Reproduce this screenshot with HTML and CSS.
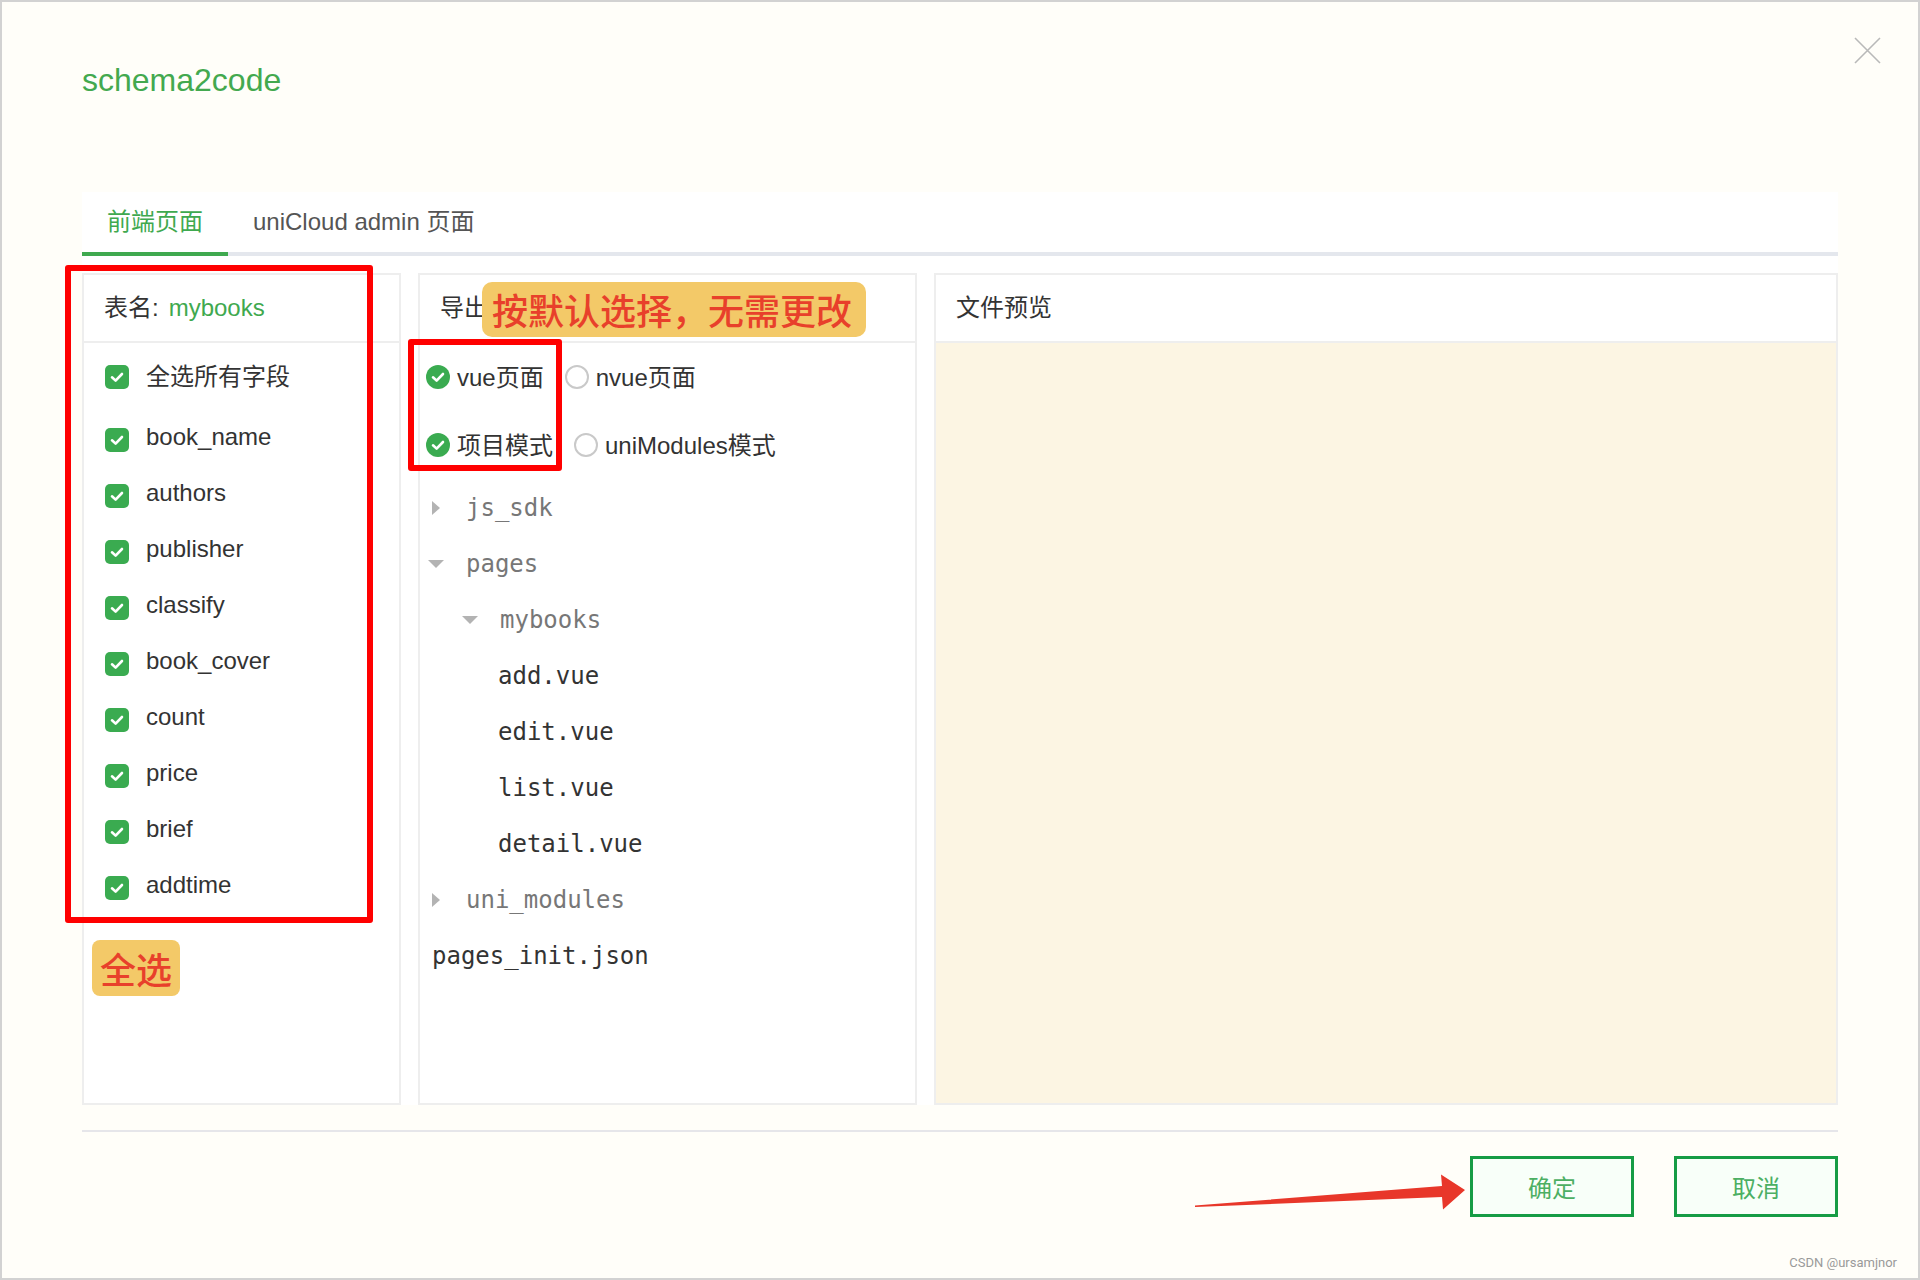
FILE: index.html
```html
<!DOCTYPE html>
<html lang="zh-CN">
<head>
<meta charset="utf-8">
<title>schema2code</title>
<link rel="stylesheet" href="styles.css">
</head>
<body>
<div class="dialog">
  <h1 class="title">schema2code</h1>
  <button class="close" aria-label="关闭">
    <svg width="27" height="27" viewBox="0 0 27 27"><path d="M1 1 L26 26 M26 1 L1 26" stroke="#b9b9b9" stroke-width="1.6" fill="none"/></svg>
  </button>
  <div class="main">
    <div class="tabs">
      <div class="tab active">前端页面</div>
      <div class="tab">uniCloud admin 页面</div>
    </div>
    <div class="panels">
      <section class="panel">
        <div class="panel-head">表名:<span class="green">mybooks</span></div>
        <div class="panel-body fields">
          <div class="check first"><svg class="cb" width="24" height="24" viewBox="0 0 24 24"><rect width="24" height="24" rx="5" fill="#3aab50"/><path d="M7 12.3 L10.6 15.6 L17 9" stroke="#fff" stroke-width="2.6" fill="none" stroke-linecap="round" stroke-linejoin="round"/></svg><span>全选所有字段</span></div>
          <div class="check"><svg class="cb" width="24" height="24" viewBox="0 0 24 24"><rect width="24" height="24" rx="5" fill="#3aab50"/><path d="M7 12.3 L10.6 15.6 L17 9" stroke="#fff" stroke-width="2.6" fill="none" stroke-linecap="round" stroke-linejoin="round"/></svg><span>book_name</span></div>
          <div class="check"><svg class="cb" width="24" height="24" viewBox="0 0 24 24"><rect width="24" height="24" rx="5" fill="#3aab50"/><path d="M7 12.3 L10.6 15.6 L17 9" stroke="#fff" stroke-width="2.6" fill="none" stroke-linecap="round" stroke-linejoin="round"/></svg><span>authors</span></div>
          <div class="check"><svg class="cb" width="24" height="24" viewBox="0 0 24 24"><rect width="24" height="24" rx="5" fill="#3aab50"/><path d="M7 12.3 L10.6 15.6 L17 9" stroke="#fff" stroke-width="2.6" fill="none" stroke-linecap="round" stroke-linejoin="round"/></svg><span>publisher</span></div>
          <div class="check"><svg class="cb" width="24" height="24" viewBox="0 0 24 24"><rect width="24" height="24" rx="5" fill="#3aab50"/><path d="M7 12.3 L10.6 15.6 L17 9" stroke="#fff" stroke-width="2.6" fill="none" stroke-linecap="round" stroke-linejoin="round"/></svg><span>classify</span></div>
          <div class="check"><svg class="cb" width="24" height="24" viewBox="0 0 24 24"><rect width="24" height="24" rx="5" fill="#3aab50"/><path d="M7 12.3 L10.6 15.6 L17 9" stroke="#fff" stroke-width="2.6" fill="none" stroke-linecap="round" stroke-linejoin="round"/></svg><span>book_cover</span></div>
          <div class="check"><svg class="cb" width="24" height="24" viewBox="0 0 24 24"><rect width="24" height="24" rx="5" fill="#3aab50"/><path d="M7 12.3 L10.6 15.6 L17 9" stroke="#fff" stroke-width="2.6" fill="none" stroke-linecap="round" stroke-linejoin="round"/></svg><span>count</span></div>
          <div class="check"><svg class="cb" width="24" height="24" viewBox="0 0 24 24"><rect width="24" height="24" rx="5" fill="#3aab50"/><path d="M7 12.3 L10.6 15.6 L17 9" stroke="#fff" stroke-width="2.6" fill="none" stroke-linecap="round" stroke-linejoin="round"/></svg><span>price</span></div>
          <div class="check"><svg class="cb" width="24" height="24" viewBox="0 0 24 24"><rect width="24" height="24" rx="5" fill="#3aab50"/><path d="M7 12.3 L10.6 15.6 L17 9" stroke="#fff" stroke-width="2.6" fill="none" stroke-linecap="round" stroke-linejoin="round"/></svg><span>brief</span></div>
          <div class="check"><svg class="cb" width="24" height="24" viewBox="0 0 24 24"><rect width="24" height="24" rx="5" fill="#3aab50"/><path d="M7 12.3 L10.6 15.6 L17 9" stroke="#fff" stroke-width="2.6" fill="none" stroke-linecap="round" stroke-linejoin="round"/></svg><span>addtime</span></div>
        </div>
      </section>
      <section class="panel">
        <div class="panel-head">导出</div>
        <div class="panel-body export">
          <div class="radio-row">
            <span class="radio"><svg width="24" height="24" viewBox="0 0 24 24"><circle cx="12" cy="12" r="12" fill="#3aab50"/><path d="M7 12.3 L10.6 15.6 L17 9" stroke="#fff" stroke-width="2.6" fill="none" stroke-linecap="round" stroke-linejoin="round"/></svg><span>vue页面</span></span>
            <span class="radio"><svg width="24" height="24" viewBox="0 0 24 24"><circle cx="12" cy="12" r="11" fill="#fff" stroke="#c9c9c9" stroke-width="2"/></svg><span>nvue页面</span></span>
          </div>
          <div class="radio-row">
            <span class="radio"><svg width="24" height="24" viewBox="0 0 24 24"><circle cx="12" cy="12" r="12" fill="#3aab50"/><path d="M7 12.3 L10.6 15.6 L17 9" stroke="#fff" stroke-width="2.6" fill="none" stroke-linecap="round" stroke-linejoin="round"/></svg><span>项目模式</span></span>
            <span class="radio"><svg width="24" height="24" viewBox="0 0 24 24"><circle cx="12" cy="12" r="11" fill="#fff" stroke="#c9c9c9" stroke-width="2"/></svg><span>uniModules模式</span></span>
          </div>
          <ul class="tree">
            <li class="node dir lv0"><svg class="caret" width="16" height="16" viewBox="0 0 16 16"><path d="M4 1 L12 8 L4 15 Z" fill="#b3b3b3"/></svg><span>js_sdk</span></li>
            <li class="node dir lv0"><svg class="caret" width="16" height="16" viewBox="0 0 16 16"><path d="M0 4 L16 4 L8 12 Z" fill="#b3b3b3"/></svg><span>pages</span></li>
            <li class="node dir lv1"><svg class="caret" width="16" height="16" viewBox="0 0 16 16"><path d="M0 4 L16 4 L8 12 Z" fill="#b3b3b3"/></svg><span>mybooks</span></li>
            <li class="node file lv2">add.vue</li>
            <li class="node file lv2">edit.vue</li>
            <li class="node file lv2">list.vue</li>
            <li class="node file lv2">detail.vue</li>
            <li class="node dir lv0"><svg class="caret" width="16" height="16" viewBox="0 0 16 16"><path d="M4 1 L12 8 L4 15 Z" fill="#b3b3b3"/></svg><span>uni_modules</span></li>
            <li class="node file root">pages_init.json</li>
          </ul>
        </div>
      </section>
      <section class="panel">
        <div class="panel-head">文件预览</div>
        <div class="panel-body preview"></div>
      </section>
    </div>
  </div>
  <div class="divider"></div>
  <div class="actions">
    <button class="btn">确定</button>
    <button class="btn">取消</button>
  </div>
</div>

<div class="mark mark-fields"></div>
<div class="mark mark-mode"></div>
<div class="note note-default">按默认选择，无需更改</div>
<div class="note note-all">全选</div>
<svg class="arrow" width="280" height="45" viewBox="0 0 280 45"><polygon points="5,35.5 252,16 251,4.5 275,20 253,39.5 252,27 5,37" fill="#e8372a"/></svg>
<div class="watermark">CSDN @ursamjnor</div>
</body>
</html>
```

FILE: styles.css
```css
* { box-sizing: border-box; }

html, body { margin: 0; padding: 0; }

body {
  width: 1920px;
  height: 1280px;
  border: 2px solid #d2d2d2;
  background: #fffef9;
  position: relative;
  overflow: hidden;
  font-family: "Liberation Sans", "Noto Sans CJK SC", sans-serif;
  color: #333;
}

.dialog {
  padding: 0 80px;
}

.title {
  margin: 58px 0 0;
  height: 40px;
  line-height: 40px;
  font-size: 32px;
  font-weight: normal;
  color: #43a94f;
}

.close {
  position: absolute;
  left: 1852px;
  top: 35px;
  width: 27px;
  height: 27px;
  padding: 0;
  border: 0;
  background: none;
  display: block;
}
.close svg { display: block; }

.main {
  margin-top: 92px;
  background: #fff;
  height: 913px;
}

.tabs {
  display: flex;
  height: 64px;
  border-bottom: 4px solid #e4e7ed;
}

.tab {
  height: 64px;
  padding: 0 25px;
  line-height: 60px;
  font-size: 24px;
  color: #555;
  margin-bottom: -4px;
  border-bottom: 4px solid transparent;
}
.tab.active {
  color: #3fa94f;
  border-bottom-color: #3fa94f;
}

.panels {
  margin-top: 17px;
  display: grid;
  grid-template-columns: 319px 499px 1fr;
  column-gap: 17px;
  height: 832px;
}

.panel {
  border: 2px solid #eeeeee;
  display: flex;
  flex-direction: column;
  background: #fff;
  min-height: 0;
}

.panel-head {
  height: 68px;
  flex: none;
  border-bottom: 2px solid #eeeeee;
  padding-left: 20px;
  line-height: 66px;
  font-size: 24px;
  color: #333;
}

.green { color: #3fa94f; margin-left: 10px; }

.panel-body { flex: 1; }

.fields {
  padding: 6px 0 0 21px;
}

.check {
  display: flex;
  align-items: center;
  height: 56px;
  font-size: 24px;
  color: #333;
}
.check.first { margin-bottom: 7px; }
.check .cb { flex: none; margin-right: 17px; }
.check span { position: relative; top: -3px; }

.export {
  padding: 1px 0 0 6px;
}

.radio-row {
  display: flex;
  align-items: center;
  height: 68px;
  font-size: 24px;
  color: #333;
}

.radio {
  display: flex;
  align-items: center;
}
.radio + .radio { margin-left: 21px; }
.radio svg { flex: none; margin-right: 7px; position: relative; top: -1px; }
.radio span { position: relative; top: -3px; }

.tree {
  list-style: none;
  margin: 0;
  padding: 0;
  font-family: "DejaVu Sans Mono", "Liberation Mono", monospace;
  font-size: 24px;
}

.node {
  display: flex;
  align-items: center;
  height: 56px;
}
.node .caret { flex: none; margin-right: 22px; }
.node.dir { color: #777; }
.node.file { color: #333; }
.node.lv0 { padding-left: 2px; }
.node.lv1 { padding-left: 36px; }
.node.lv2 { padding-left: 72px; }
.node.root { padding-left: 6px; }

.preview {
  background: #fcf5e3;
}

.divider {
  margin-top: 25px;
  height: 2px;
  background: #e6e6ea;
}

.actions {
  margin-top: 24px;
  display: flex;
  justify-content: flex-end;
  gap: 40px;
}

.btn {
  width: 164px;
  height: 61px;
  border: 3px solid #169c45;
  background: #f8fff9;
  color: #4caf63;
  font-family: "Liberation Sans", "Noto Sans CJK SC", sans-serif;
  font-size: 24px;
  padding: 0;
}

/* annotations */
.mark {
  position: absolute;
  border: 6px solid #ff0000;
  border-radius: 3px;
}
.mark-fields { left: 63px; top: 263px; width: 308px; height: 658px; }
.mark-mode { left: 406px; top: 337px; width: 154px; height: 132px; }

.note {
  position: absolute;
  background: #f3c968;
  color: #e8402b;
  font-family: "Noto Sans CJK SC", sans-serif;
  font-weight: 500;
  font-size: 36px;
  white-space: nowrap;
}
.note-default {
  left: 480px;
  top: 280px;
  width: 384px;
  height: 55px;
  line-height: 55px;
  padding-left: 10px;
  border-radius: 10px;
}
.note-all {
  left: 90px;
  top: 938px;
  width: 88px;
  height: 56px;
  line-height: 56px;
  text-align: center;
  border-radius: 8px;
}

.arrow {
  position: absolute;
  left: 1188px;
  top: 1168px;
}

.watermark {
  position: absolute;
  right: 21px;
  top: 1253px;
  line-height: 16px;
  font-size: 13px;
  color: #9a9a9a;
  font-family: "Roboto", "Liberation Sans", sans-serif;
}
```
